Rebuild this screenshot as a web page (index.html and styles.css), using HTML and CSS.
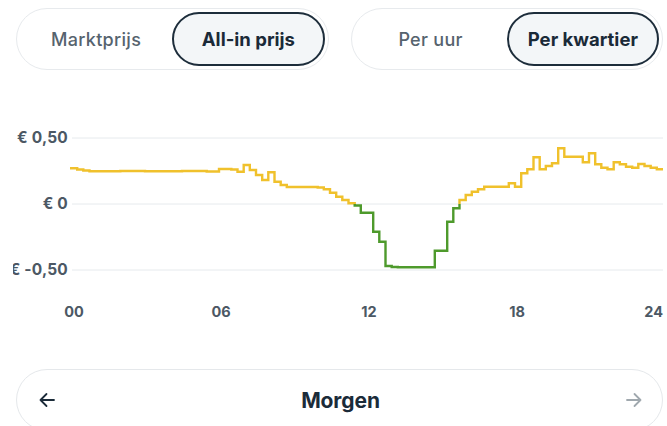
FILE: index.html
```html
<!DOCTYPE html>
<html lang="nl">
<head>
<meta charset="utf-8">
<title>Prijzen</title>
<link rel="stylesheet" href="styles.css">
</head>
<body>
<div class="page">
  <div class="toggles">
    <div class="seg">
      <button class="seg-btn">Marktprijs</button>
      <button class="seg-btn active">All-in prijs</button>
    </div>
    <div class="seg">
      <button class="seg-btn">Per uur</button>
      <button class="seg-btn active">Per kwartier</button>
    </div>
  </div>

  <div class="chart">
    <div class="y-axis">
      <span class="y-label">€ 0,50</span>
      <span class="y-label">€ 0</span>
      <span class="y-label">€ -0,50</span>
    </div>
    <div class="plot">
      <svg class="plot-svg" viewBox="72 100 591 200" width="591" height="200" preserveAspectRatio="none">
        <g class="grid">
          <line x1="72" y1="138" x2="663" y2="138"/>
          <line x1="72" y1="204" x2="663" y2="204"/>
          <line x1="72" y1="270" x2="663" y2="270"/>
        </g>
        <path class="line-pos" d="M70 168.3 H77.2 V169.5 H83.3 V170.5 H89.5 V171.3 H120.3 V171 H145 V171.3 H182 V171 H206.7 V171.5 H219 V169 H231.3 V169.5 H237.5 V171.7 H243.7 V165 H249.8 V170 H256 V175 H262.2 V180 H268.3 V172.3 H274.5 V181.7 H280.7 V185 H286.8 V187 H317.7 V187.5 H323.8 V189.3 H330 V192.7 H336.2 V196.7 H342.3 V200 H348.5 V203.3 H354.7 V204"/>
        <path class="line-neg" d="M354.7 204 V205.5 H360.8 V212.7 H373.2 V231.7 H379.3 V241.7 H385.5 V266 H391.7 V267 H397.8 V267.3 H434.8 V250.7 H447.2 V221.7 H453.3 V208.3 H459.5 V204"/>
        <path class="line-pos" d="M459.5 204 V200 H465.7 V195 H471.8 V191.7 H478 V189.3 H484.2 V186.7 H508.8 V183.3 H515 V186.7 H521.2 V173.3 H527.3 V169.3 H533.5 V157.3 H539.7 V169.3 H545.8 V166 H552 V163.3 H558.2 V148.3 H564.3 V156.7 H582.8 V162.3 H589 V153.3 H595.2 V164.3 H601.3 V167.7 H607.5 V169.3 H613.7 V162.3 H619.8 V164.3 H626 V166.7 H632.2 V167.7 H638.3 V164 H644.5 V166 H650.7 V167.7 H656.8 V169.3 H663"/>
      </svg>
    </div>
  </div>

  <div class="x-axis">
    <span class="x-label" style="left: 58px">00</span>
    <span class="x-label" style="left: 205px">06</span>
    <span class="x-label" style="left: 353px">12</span>
    <span class="x-label" style="left: 501px">18</span>
    <span class="x-label x-last">24</span>
  </div>

  <div class="day-nav">
    <button class="nav-arrow" aria-label="Vorige dag">
      <svg viewBox="0 0 18 18" width="18" height="18"><path d="M16 9 H2.5 M8.5 3 L2.5 9 L8.5 15"/></svg>
    </button>
    <span class="day-title">Morgen</span>
    <button class="nav-arrow disabled" aria-label="Volgende dag">
      <svg viewBox="0 0 18 18" width="18" height="18"><path d="M2 9 H15.5 M9.5 3 L15.5 9 L9.5 15"/></svg>
    </button>
  </div>
</div>
</body>
</html>
```

FILE: styles.css
```css
* { box-sizing: border-box; }

html, body {
  margin: 0;
  padding: 0;
  background: #ffffff;
  overflow: hidden;
}

body {
  font-family: "Inter", "Noto Sans", sans-serif;
  color: #1b2b39;
}

.page {
  width: 667px;
  height: 426px;
  padding: 8px 4px 0 16px;
}

.toggles {
  display: flex;
  gap: 22px;
}

.seg {
  flex: 1;
  display: flex;
  height: 62px;
  padding: 3px;
  border: 1px solid #e7eaed;
  border-radius: 31px;
  background: #fff;
}

.seg-btn {
  flex: 1;
  border: 2px solid transparent;
  border-radius: 28px;
  background: transparent;
  font-family: inherit;
  font-size: 18px;
  font-weight: 500;
  letter-spacing: 0.3px;
  color: #56636e;
  padding: 0;
  cursor: pointer;
}

.seg-btn.active {
  border-color: #1d2d3b;
  background: #f3f6f8;
  color: #1a2a38;
  font-size: 18.5px;
  font-weight: 700;
  letter-spacing: 0;
}

.chart {
  display: flex;
  margin-top: 30px;
  height: 200px;
}

.y-axis {
  width: 55px;
  margin-left: -3px;
  overflow: hidden;
  display: flex;
  flex-direction: column;
  align-items: flex-end;
  padding-top: 28px;
  gap: 46px;
  margin-right: 4px;
}

.y-label {
  display: block;
  white-space: nowrap;
  line-height: 20px;
  font-size: 15.5px;
  font-weight: 700;
  letter-spacing: 0.2px;
  color: #4c5864;
}

.plot {
  width: 591px;
  height: 200px;
}

.plot-svg {
  display: block;
  overflow: visible;
}

.grid line {
  stroke: #e6eaed;
  stroke-width: 1;
}

.line-pos, .line-neg {
  fill: none;
  stroke-width: 2.4;
  stroke-linejoin: miter;
  stroke-linecap: butt;
}

.line-pos { stroke: #f0c12c; }
.line-neg { stroke: #4e9a2c; }

.x-axis {
  position: relative;
  height: 24px;
  margin-left: -16px;
}

.x-label {
  position: absolute;
  top: 0;
  width: 32px;
  text-align: center;
  line-height: 24px;
  font-size: 14.5px;
  font-weight: 700;
  color: #4c5864;
}

.x-label.x-last {
  left: auto;
  right: 0;
  width: auto;
}

.day-nav {
  display: flex;
  align-items: center;
  justify-content: space-between;
  margin-top: 45px;
  height: 62px;
  padding: 0 13px 0 15px;
  border: 1px solid #e5e8eb;
  border-radius: 31px;
}

.nav-arrow {
  width: 30px;
  height: 30px;
  display: flex;
  align-items: center;
  justify-content: center;
  border: 0;
  background: transparent;
  padding: 0;
}

.nav-arrow path {
  fill: none;
  stroke: #1b2b39;
  stroke-width: 1.8;
  stroke-linecap: round;
  stroke-linejoin: round;
}

.nav-arrow.disabled path {
  stroke: #a0a8ae;
}

.day-title {
  font-size: 21px;
  font-weight: 700;
  letter-spacing: -0.1px;
  color: #1b2b39;
}
```
